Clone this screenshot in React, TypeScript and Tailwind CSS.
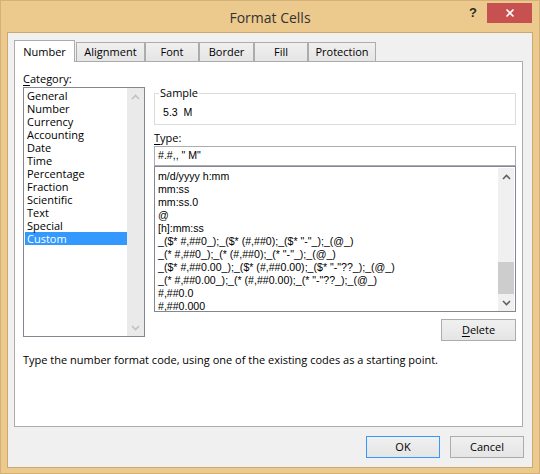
import React from "react";

const categories = [
  "General",
  "Number",
  "Currency",
  "Accounting",
  "Date",
  "Time",
  "Percentage",
  "Fraction",
  "Scientific",
  "Text",
  "Special",
  "Custom",
];

const types = [
  "m/d/yyyy h:mm",
  "mm:ss",
  "mm:ss.0",
  "@",
  "[h]:mm:ss",
  '_($* #,##0_);_($* (#,##0);_($* "-"_);_(@_)',
  '_(* #,##0_);_(* (#,##0);_(* "-"_);_(@_)',
  '_($* #,##0.00_);_($* (#,##0.00);_($* "-"??_);_(@_)',
  '_(* #,##0.00_);_(* (#,##0.00);_(* "-"??_);_(@_)',
  "#,##0.0",
  "#,##0.000",
];

function Chevron({ up, color }: { up: boolean; color: string }) {
  return (
    <svg width="9" height="6" viewBox="0 0 9 6">
      <path
        d={up ? "M1 5 L4.5 1.5 L8 5" : "M1 1 L4.5 4.5 L8 1"}
        fill="none"
        stroke={color}
        strokeWidth="1.6"
      />
    </svg>
  );
}

export default function App() {
  return (
    <div className="w-[540px] h-[474px] bg-[#ecca8d] border border-[#d3b179] flex flex-col font-['Open_Sans',sans-serif] text-[11px] text-black overflow-hidden">
      {/* Title bar */}
      <div className="relative h-[31px] shrink-0 flex items-center justify-center">
        <span className="text-[14px] text-[#333333] mt-[1px]">Format Cells</span>
        <div className="absolute right-[7px] top-[2px] flex items-start">
          <span className="w-[28px] h-[20px] flex items-center justify-center font-['Liberation_Sans',sans-serif] font-bold text-[13px] text-[#2b2b2b]">
            ?
          </span>
          <div className="w-[45px] h-[20px] bg-[#c75050] flex items-center justify-center">
            <svg width="10" height="10" viewBox="0 0 10 10">
              <path d="M1.5 1.5 L8.5 8.5 M8.5 1.5 L1.5 8.5" stroke="#ffffff" strokeWidth="1.6" />
            </svg>
          </div>
        </div>
      </div>

      {/* Client area */}
      <div className="mx-[6px] h-[436px] border border-[#c9a96f] bg-[#f0f0f0] flex flex-col">
        {/* Tabs */}
        <div className="h-[28px] shrink-0 pl-[6px] flex items-end">
          <div className="relative z-10 -mb-px h-[22px] w-[61px] bg-white border border-b-0 border-[#acacac] flex items-center justify-center pt-[1px]">
            Number
          </div>
          <div className="ml-[1px] h-[19px] w-[69px] bg-gradient-to-b from-[#f0f0f0] to-[#e5e5e5] border border-b-0 border-[#acacac] flex items-center justify-center pt-[1px]">
            Alignment
          </div>
          <div className="h-[19px] w-[54px] bg-gradient-to-b from-[#f0f0f0] to-[#e5e5e5] border border-b-0 border-[#acacac] flex items-center justify-center pt-[1px]">
            Font
          </div>
          <div className="h-[19px] w-[55px] bg-gradient-to-b from-[#f0f0f0] to-[#e5e5e5] border border-b-0 border-[#acacac] flex items-center justify-center pt-[1px]">
            Border
          </div>
          <div className="h-[19px] w-[54px] bg-gradient-to-b from-[#f0f0f0] to-[#e5e5e5] border border-b-0 border-[#acacac] flex items-center justify-center pt-[1px]">
            Fill
          </div>
          <div className="h-[19px] w-[68px] bg-gradient-to-b from-[#f0f0f0] to-[#e5e5e5] border border-b-0 border-[#acacac] flex items-center justify-center pt-[1px]">
            Protection
          </div>
        </div>

        {/* Panel */}
        <div className="ml-[6px] w-[509px] h-[366px] shrink-0 bg-white border border-[#acacac] flex flex-col pl-[8px]">
          <div className="flex">
            {/* Left column */}
            <div className="pt-[9px] flex flex-col">
              <div className="h-[16px] leading-[16px]">
                <span className="underline underline-offset-2">C</span>ategory:
              </div>
              <div className="w-[122px] h-[250px] border border-[#828790] flex">
                <div className="flex-1 pt-[1px] pl-[1px]">
                  {categories.map((c) => (
                    <div
                      key={c}
                      className={
                        c === "Custom"
                          ? "h-[13px] leading-[13px] pl-[2px] bg-[#3399ff] text-white"
                          : "h-[13px] leading-[13px] pl-[2px]"
                      }
                    >
                      {c}
                    </div>
                  ))}
                </div>
                <div className="w-[17px] bg-[#eaeaea] flex flex-col justify-between">
                  <div className="h-[17px] flex items-center justify-center">
                    <Chevron up color="#c2c2c2" />
                  </div>
                  <div className="h-[17px] flex items-center justify-center">
                    <Chevron up={false} color="#c2c2c2" />
                  </div>
                </div>
              </div>
            </div>

            {/* Right column */}
            <div className="ml-[9px] w-[362px] pt-[24px] flex flex-col">
              <fieldset className="h-[39px] border border-[#dcdcdc]">
                <legend className="ml-[4px] px-[1px] leading-[14px]">Sample</legend>
                <p className="pl-[8px] pt-[6px] leading-[13px] text-[10.6px] font-['Liberation_Sans',sans-serif] whitespace-pre">
                  5.3  M
                </p>
              </fieldset>
              <div className="mt-[5px] h-[16px] leading-[16px]">
                <span className="underline underline-offset-2">T</span>ype:
              </div>
              <div className="h-[20px] border border-[#abadb3] flex items-center pl-[3px] text-[10.6px] font-['Liberation_Sans',sans-serif]">
                #.#,, " M"
              </div>
              <div className="h-[146px] border border-[#828790] flex">
                <div className="flex-1 pt-[3px] pl-[3px] text-[10.6px] font-['Liberation_Sans',sans-serif] overflow-hidden">
                  {types.map((t) => (
                    <div key={t} className="h-[13px] leading-[13px] whitespace-pre">
                      {t}
                    </div>
                  ))}
                </div>
                <div className="w-[16px] mt-[1px] mr-[1px] bg-[#f0f0f0] flex flex-col">
                  <div className="h-[17px] flex items-center justify-center">
                    <Chevron up color="#606060" />
                  </div>
                  <div className="flex-1">
                    <div className="mt-[77px] h-[32px] bg-[#cdcdcd]" />
                  </div>
                  <div className="h-[17px] flex items-center justify-center">
                    <Chevron up={false} color="#606060" />
                  </div>
                </div>
              </div>
              <div className="mt-[7px] self-end w-[75px] h-[22px] border border-[#acacac] bg-gradient-to-b from-[#f0f0f0] to-[#e5e5e5] flex items-center justify-center">
                <span>
                  <span className="underline underline-offset-2">D</span>elete
                </span>
              </div>
            </div>
          </div>
          <div className="mt-[11px] leading-[16px]">
            Type the number format code, using one of the existing codes as a starting point.
          </div>
        </div>

        {/* Buttons */}
        <div className="mt-[9px] flex justify-end gap-[10px] pr-[8px]">
          <div className="w-[74px] h-[22px] border border-[#3399ff] bg-gradient-to-b from-[#f0f0f0] to-[#e5e5e5] flex items-center justify-center">
            OK
          </div>
          <div className="w-[74px] h-[22px] border border-[#acacac] bg-gradient-to-b from-[#f0f0f0] to-[#e5e5e5] flex items-center justify-center">
            Cancel
          </div>
        </div>
      </div>
    </div>
  );
}
